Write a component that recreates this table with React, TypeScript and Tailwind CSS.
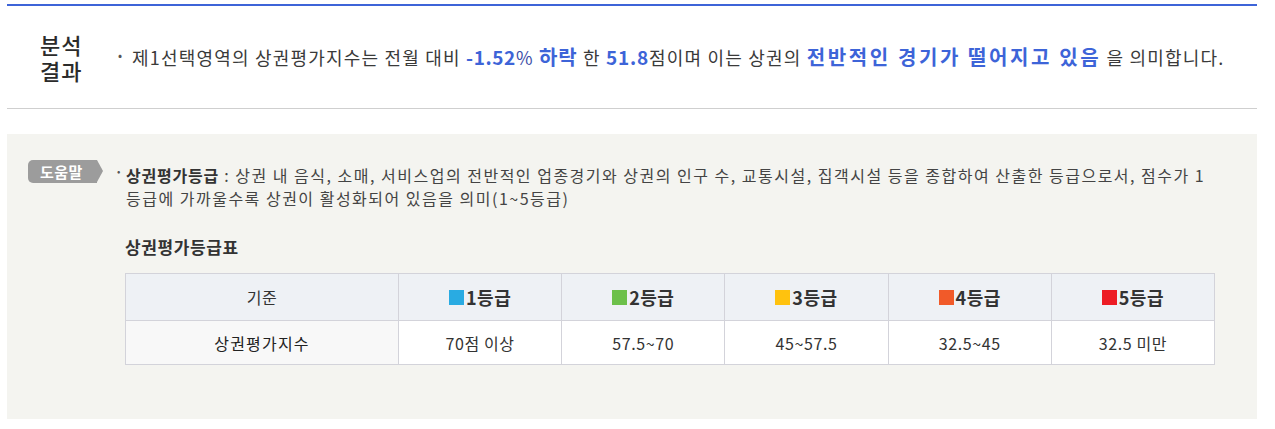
import React from "react";

const FONT = { fontFamily: '"Noto Sans CJK KR", "Noto Sans", sans-serif' };

const grades = [
  { label: "1등급", color: "bg-[#29abe2]", value: "70점 이상" },
  { label: "2등급", color: "bg-[#6cc04a]", value: "57.5~70" },
  { label: "3등급", color: "bg-[#ffc20e]", value: "45~57.5" },
  { label: "4등급", color: "bg-[#f15a29]", value: "32.5~45" },
  { label: "5등급", color: "bg-[#ed1c24]", value: "32.5 미만" },
];

export default function App() {
  return (
    <div className="w-[1275px] h-[429px] bg-white text-[#333]" style={FONT}>
      <div className="ml-[7px] w-[1250px] pt-[4px]">
        {/* result section */}
        <div className="border-t-2 border-b border-t-[#3d64d8] border-b-[#cfcfcf] h-[105px] flex items-center">
          <div className="pl-[33px] w-[111px] text-[22px] leading-[26px] tracking-[1px] text-[#2b2b2b] font-medium">
            <div>분석</div>
            <div>결과</div>
          </div>
          <div className="flex items-center text-[18px] leading-[26px] tracking-[1.2px] text-[#3a3a3a]">
            <span className="w-[14px] text-[12px] text-[#555] -mt-[4px]">•</span>
            <span>
              제1선택영역의 상권평가지수는 전월 대비{" "}
              <b className="text-[#3d64d8] text-[19px] tracking-[0.6px]">-1.52</b>
              <span className="text-[#3d4fa8]">%</span>{" "}
              <b className="text-[#3d64d8] text-[20px] tracking-[1px]">하락</b> 한{" "}
              <b className="text-[#3d64d8] text-[19px] tracking-[0.8px]">51.8</b>점이며 이는 상권의{" "}
              <b className="text-[#3d64d8] text-[20px] tracking-[2.6px]">전반적인 경기가 떨어지고 있음</b> 을 의미합니다.
            </span>
          </div>
        </div>

        {/* help panel */}
        <div className="mt-[25px] h-[285px] bg-[#f4f4f0] pl-[21px] pr-[42px] pt-[26px] flex">
          <div className="flex h-[23px] w-[89px] shrink-0">
            <div className="h-[23px] w-[69px] bg-[#9c9c9c] rounded-l-[5px] text-white text-[15px] font-bold leading-[23px] pl-[12px] tracking-[0.5px]">
              도움말
            </div>
            <div className="w-0 h-0 border-y-[11.5px] border-y-transparent border-l-[6px] border-l-[#9c9c9c]" />
          </div>
          <div className="flex-1">
            <div className="flex text-[16px] leading-[23px] text-[#444] tracking-[1.5px] mt-[4px]">
              <span className="w-[9px] shrink-0 text-[10px] text-[#555] leading-[14px]">•</span>
              <p>
                <b className="text-[#333] tracking-[0.8px]">상권평가등급</b> : 상권 내 음식, 소매, 서비스업의 전반적인 업종경기와 상권의 인구 수, 교통시설, 집객시설 등을 종합하여 산출한 등급으로서, 점수가 1 등급에 가까울수록 상권이 활성화되어 있음을 의미(1~5등급)
              </p>
            </div>
            <div className="ml-[8px] mt-[25px] text-[17px] font-bold leading-[24px] tracking-[0.6px] text-[#333]">상권평가등급표</div>
            <table className="ml-[8px] mt-[14px] w-[1090px] border-collapse text-[16px] text-[#333] table-fixed tracking-[0.6px]">
              <colgroup>
                <col className="w-[273px]" />
                <col />
                <col />
                <col />
                <col />
                <col />
              </colgroup>
              <thead>
                <tr className="h-[47px] bg-[#eef1f5]">
                  <th className="border border-[#d3d3da] font-normal">기준</th>
                  {grades.map((g) => (
                    <th key={g.label} className="border border-[#d3d3da]">
                      <span className="inline-flex items-center gap-[2px] text-[18px] font-bold tracking-[0.5px]">
                        <span className={`inline-block w-[15px] h-[15px] ${g.color}`} />
                        {g.label}
                      </span>
                    </th>
                  ))}
                </tr>
              </thead>
              <tbody>
                <tr className="h-[44px]">
                  <td className="border border-[#d3d3da] bg-[#f8f8f8] text-center tracking-[1.2px] text-[#222]">상권평가지수</td>
                  {grades.map((g) => (
                    <td key={g.label} className="border border-[#d3d3da] bg-white text-center">
                      {g.value}
                    </td>
                  ))}
                </tr>
              </tbody>
            </table>
          </div>
        </div>
      </div>
    </div>
  );
}
